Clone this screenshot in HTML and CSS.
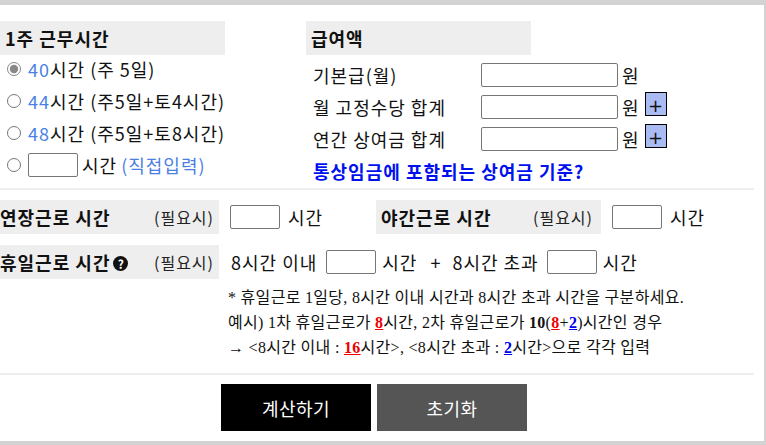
FILE: index.html
```html
<!DOCTYPE html>
<html>
<head>
    <title>통상임금 계산기</title>
    <link rel="stylesheet" href="styles.css">
</head>
<body>
    <div class="calc">
        <div class="top">
            <div class="col-hours">
                <h3 class="box-title">1주 근무시간</h3>
                <label class="radio-row"><input type="radio" name="hours" checked><span class="num">40</span>시간 (주 5일)</label>
                <label class="radio-row"><input type="radio" name="hours"><span class="num">44</span>시간 (주5일+토4시간)</label>
                <label class="radio-row"><input type="radio" name="hours"><span class="num">48</span>시간 (주5일+토8시간)</label>
                <label class="radio-row"><input type="radio" name="hours"><input type="text" class="hour-input custom-hours">시간 <span class="num direct">(직접입력)</span></label>
            </div>
            <div class="col-pay">
                <h3 class="box-title">급여액</h3>
                <div class="pay-rows">
                    <div class="pay-row">
                        <span class="pay-label">기본급(월)</span>
                        <input type="text" class="pay-input">
                        <span class="won">원</span>
                    </div>
                    <div class="pay-row">
                        <span class="pay-label">월 고정수당 합계</span>
                        <input type="text" class="pay-input">
                        <span class="won">원</span>
                        <button class="plus-btn">+</button>
                    </div>
                    <div class="pay-row">
                        <span class="pay-label">연간 상여금 합계</span>
                        <input type="text" class="pay-input">
                        <span class="won">원</span>
                        <button class="plus-btn">+</button>
                    </div>
                    <div class="pay-row">
                        <a class="bonus-link" href="#">통상임금에 포함되는 상여금 기준?</a>
                    </div>
                </div>
            </div>
        </div>

        <div class="extra-row first">
            <div class="extra-group">
                <div class="field-box narrow">
                    <span class="field-title">연장근로 시간</span>
                    <span class="optional">(필요시)</span>
                </div>
                <input type="text" class="hour-input gap-left">
                <span class="unit">시간</span>
            </div>
            <div class="extra-group">
                <div class="field-box wide">
                    <span class="field-title">야간근로 시간</span>
                    <span class="optional">(필요시)</span>
                </div>
                <input type="text" class="hour-input gap-left">
                <span class="unit">시간</span>
            </div>
        </div>

        <div class="extra-row second">
            <div class="field-box narrow">
                <span class="field-title">휴일근로 시간<span class="help">?</span></span>
                <span class="optional">(필요시)</span>
            </div>
            <span class="holiday-text">8시간 이내</span>
            <input type="text" class="hour-input">
            <span class="unit short">시간</span>
            <span class="plus-sign">+</span>
            <span class="holiday-text over">8시간 초과</span>
            <input type="text" class="hour-input">
            <span class="unit short">시간</span>
        </div>

        <div class="notes">
            <p>* 휴일근로 1일당, 8시간 이내 시간과 8시간 초과 시간을 구분하세요.</p>
            <p>예시) 1차 휴일근로가 <b class="red">8</b>시간, 2차 휴일근로가 <b>10</b>(<b class="red">8</b>+<b class="blue">2</b>)시간인 경우</p>
            <p>→ &lt;8시간 이내 : <b class="red">16</b>시간&gt;, &lt;8시간 초과 : <b class="blue">2</b>시간&gt;으로 각각 입력</p>
        </div>

        <div class="actions">
            <button class="btn btn-calc">계산하기</button>
            <button class="btn btn-reset">초기화</button>
        </div>
    </div>
</body>
</html>
```

FILE: styles.css
```css
body {
    margin: 0;
    font-family: "Noto Sans CJK KR", sans-serif;
    font-size: 18px;
    letter-spacing: 1px;
    color: #111;
    background: #fff;
}
.calc {
    height: 436px;
    border-top: 5px solid #d3d3d3;
    border-right: 2px solid #d3d3d3;
    border-bottom: 4px solid #d3d3d3;
    overflow: hidden;
}
.top {
    display: grid;
    grid-template-columns: 306px 1fr;
    height: 167px;
    padding-top: 16px;
    margin-right: 10px;
    border-bottom: 2px solid #eee;
}
.box-title {
    margin: 0;
    width: 225px;
    height: 34px;
    line-height: 34px;
    padding-left: 5px;
    box-sizing: border-box;
    background: #eee;
    font-size: 18px;
    font-weight: bold;
}
.radio-row {
    display: flex;
    align-items: center;
    height: 32px;
    margin-top: -2px;
    margin-bottom: 2px;
    white-space: nowrap;
}
.radio-row input[type="radio"] {
    width: 14px;
    height: 14px;
    margin: 0 7px 0 7px;
    accent-color: #888;
}
.num {
    color: #4a7fe3;
}
.direct {
    margin-left: 4px;
}
.hour-input {
    width: 50px;
    height: 24px;
    box-sizing: border-box;
    border: 1px solid #767676;
    border-radius: 2px;
    padding: 2px;
}
.custom-hours {
    margin-right: 4px;
}
.pay-rows {
    margin-top: 4px;
}
.pay-row {
    display: flex;
    align-items: center;
    height: 32px;
    padding-left: 7px;
    white-space: nowrap;
}
.pay-label {
    width: 168px;
    flex-shrink: 0;
}
.pay-input {
    width: 137px;
    height: 24px;
    box-sizing: border-box;
    border: 1px solid #767676;
    border-radius: 2px;
}
.won {
    margin-left: 4px;
}
.plus-btn {
    align-self: flex-start;
    margin: 1px 0 0 5px;
    width: 22px;
    height: 24px;
    padding: 3px 0 0;
    border: 1px solid #000;
    border-radius: 0;
    background: #aabbf4;
    color: #111;
    font-family: "DejaVu Sans", sans-serif;
    font-size: 18px;
    line-height: 20px;
}
.bonus-link {
    color: #0011ee;
    font-weight: bold;
    letter-spacing: 1px;
    text-decoration: none;
}
.extra-row {
    display: flex;
    align-items: center;
    height: 34px;
    white-space: nowrap;
}
.extra-row.first {
    margin-top: 10px;
}
.extra-row.second {
    margin-top: 11px;
}
.extra-group {
    display: flex;
    align-items: center;
    width: 376px;
}
.field-box {
    display: flex;
    justify-content: space-between;
    align-items: center;
    height: 34px;
    box-sizing: border-box;
    background: #eee;
    flex-shrink: 0;
}
.field-box.narrow {
    width: 219px;
    padding-right: 5px;
}
.field-box.wide {
    width: 225px;
    padding: 0 8px 0 5px;
}
.field-title {
    font-weight: bold;
}
.optional {
    font-size: 16px;
    color: #222;
}
.gap-left {
    margin-left: 11px;
}
.unit {
    margin-left: 8px;
}
.unit.short {
    margin-left: 6px;
}
.help {
    display: inline-block;
    width: 15px;
    height: 15px;
    margin-left: 3px;
    border-radius: 50%;
    background: #111;
    color: #fff;
    font-size: 12px;
    letter-spacing: 0;
    line-height: 15px;
    text-align: center;
    vertical-align: 1px;
}
.holiday-text {
    margin: 0 9px 0 12px;
}
.holiday-text.over {
    margin: 0 8px 0 11px;
}
.plus-sign {
    margin-left: 13px;
}
.notes {
    margin-top: 6px;
    margin-right: 10px;
    padding: 0 0 13px 228px;
    border-bottom: 2px solid #eee;
    font-family: "Liberation Serif", "Noto Sans CJK KR", serif;
    font-size: 16px;
    letter-spacing: 0.3px;
    line-height: 25px;
}
.notes p {
    margin: 0;
}
.red {
    color: #ee0000;
    text-decoration: underline;
}
.blue {
    color: #0000ee;
    text-decoration: underline;
}
.actions {
    display: flex;
    gap: 6px;
    margin-top: 9px;
    padding-left: 221px;
}
.btn {
    width: 150px;
    height: 47px;
    border: none;
    color: #fff;
    font-family: "Noto Sans CJK KR", sans-serif;
    font-size: 18px;
    letter-spacing: 0.5px;
    cursor: pointer;
}
.btn-calc {
    background: #000;
}
.btn-reset {
    background: #555;
}
```
